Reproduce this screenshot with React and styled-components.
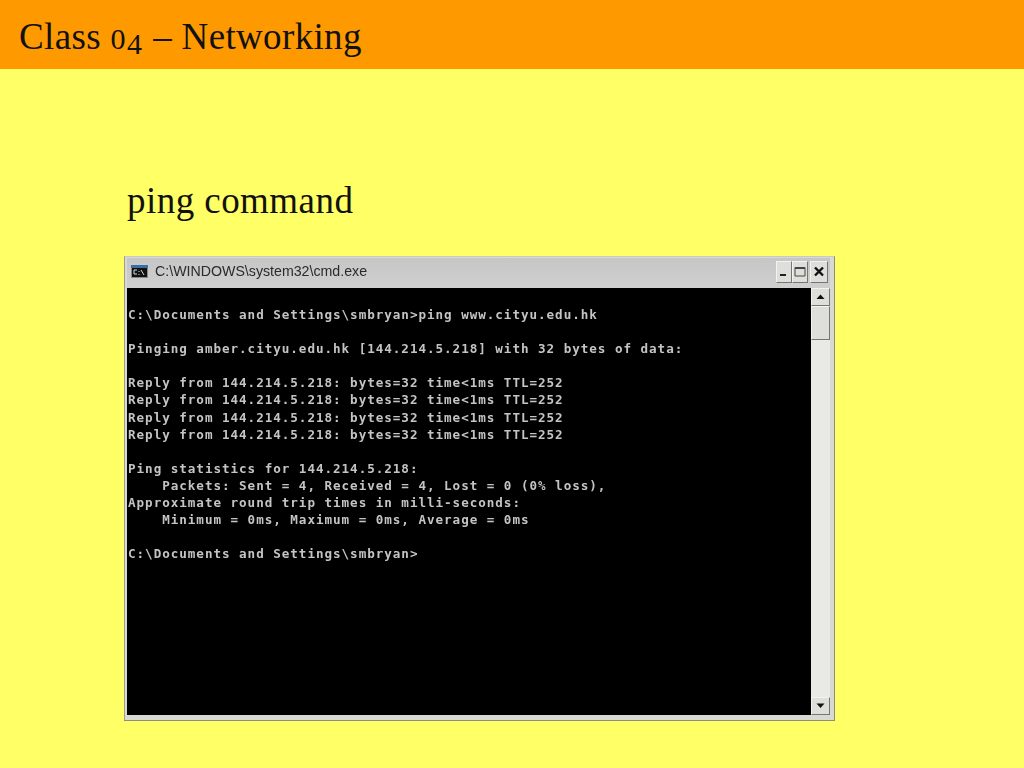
import React from "react";
import styled, {createGlobalStyle} from "styled-components";

const GlobalStyle = createGlobalStyle`
  html, body {
    margin: 0;
    padding: 0;
    background: #ffff66;
  }
`;

const Page = styled.div`
  width: 1024px;
  height: 768px;
  overflow: hidden;
  display: flex;
  flex-direction: column;
  background: #ffff66;
`;

const Header = styled.header`
  height: 69px;
  box-sizing: border-box;
  flex-shrink: 0;
  background: #ff9900;
  display: flex;
  align-items: center;
  padding: 3px 0 0 19px;
`;

const Title = styled.h1`
  margin: 0;
  font: 400 37px/1 "Liberation Serif", serif;
  letter-spacing: 0.35px;
  color: #111;
`;

const OldDigit = styled.span`
  font-size: 30px;
  letter-spacing: 1.5px;
  position: relative;
  top: ${(p) => (p.$drop ? 5 : 0)}px;
`;

const Main = styled.main`
  display: flex;
  flex-direction: column;
  padding: 111px 0 0 124px;
`;

const Heading = styled.h2`
  margin: 0 0 35px 3px;
  font: 400 37px/41px "Liberation Serif", serif;
  letter-spacing: 0.45px;
  color: #111;
`;

const Window = styled.div`
  width: 711px;
  height: 465px;
  box-sizing: border-box;
  display: flex;
  flex-direction: column;
  padding: 1px 4px 5px 2px;
  background: #d8d8d4;
  border: 1px solid #c9c9c2;
  border-left-color: #9c9c94;
  border-right-color: #8d8d78;
  border-bottom-color: #8d8d78;
`;

const TitleBar = styled.div`
  height: 30px;
  flex-shrink: 0;
  display: flex;
  align-items: center;
  padding: 0 2px 3px 4px;
  box-sizing: border-box;
  background: linear-gradient(#c6c6c6, #cfcfcf);
`;

const CmdIcon = styled.svg`
  width: 17px;
  height: 13px;
  margin-right: 7px;
`;

const TitleText = styled.span`
  flex: 1;
  font: 400 14.2px/1 "Liberation Sans", sans-serif;
  color: #2b2b2b;
  filter: blur(0.25px);
`;

const WinButton = styled.div`
  width: ${(p) => p.$w || 16}px;
  height: 22px;
  margin-left: ${(p) => p.$gap || 0}px;
  box-sizing: border-box;
  display: flex;
  align-items: center;
  justify-content: center;
  background: #dededa;
  border: 1px solid #f2f2f0;
  border-right-color: #77776f;
  border-bottom-color: #77776f;
`;

const Body = styled.div`
  flex: 1;
  min-height: 0;
  display: flex;
`;

const Console = styled.pre`
  flex: 1;
  margin: 0;
  padding: 18px 0 0 1px;
  background: #000;
  color: #c4c4c4;
  font: 700 12.6px/17.1px "DejaVu Sans Mono", monospace;
  letter-spacing: 0.96px;
  overflow: hidden;
`;

const ConsoleText = styled.span`
  display: block;
  filter: blur(0.45px);
`;

const ScrollBar = styled.div`
  width: 19px;
  flex-shrink: 0;
  display: flex;
  flex-direction: column;
  background: #e9e9e5;
`;

const ScrollButton = styled.div`
  height: 18px;
  box-sizing: border-box;
  display: flex;
  align-items: center;
  justify-content: center;
  background: #dededa;
  border: 1px solid #f2f2f0;
  border-right-color: #77776f;
  border-bottom-color: #77776f;
`;

const Thumb = styled.div`
  height: 34px;
  box-sizing: border-box;
  background: #dededa;
  border: 1px solid #f2f2f0;
  border-right-color: #77776f;
  border-bottom-color: #77776f;
`;

const Track = styled.div`
  flex: 1;
`;

const consoleText = `C:\\Documents and Settings\\smbryan>ping www.cityu.edu.hk

Pinging amber.cityu.edu.hk [144.214.5.218] with 32 bytes of data:

Reply from 144.214.5.218: bytes=32 time<1ms TTL=252
Reply from 144.214.5.218: bytes=32 time<1ms TTL=252
Reply from 144.214.5.218: bytes=32 time<1ms TTL=252
Reply from 144.214.5.218: bytes=32 time<1ms TTL=252

Ping statistics for 144.214.5.218:
    Packets: Sent = 4, Received = 4, Lost = 0 (0% loss),
Approximate round trip times in milli-seconds:
    Minimum = 0ms, Maximum = 0ms, Average = 0ms

C:\\Documents and Settings\\smbryan>`;

const App = () => {
    return (
        <Page>
            <GlobalStyle/>
            <Header>
                <Title>Class <OldDigit>0</OldDigit><OldDigit $drop>4</OldDigit> – Networking</Title>
            </Header>
            <Main>
                <Heading>ping command</Heading>
                <Window>
                    <TitleBar>
                        <CmdIcon viewBox="0 0 17 13">
                            <rect x="0" y="0" width="17" height="13" fill="#8a8a8a"/>
                            <rect x="0" y="0" width="17" height="3" fill="#3a6ea5"/>
                            <rect x="1" y="3" width="15" height="9" fill="#111"/>
                            <path d="M3 5H6M3 5V9H6M8 6V7M8 9V10M10 5L13 10" stroke="#ddd" strokeWidth="1" fill="none"/>
                        </CmdIcon>
                        <TitleText>C:\WINDOWS\system32\cmd.exe</TitleText>
                        <WinButton>
                            <svg width="10" height="10" viewBox="0 0 10 10"><rect x="1" y="7" width="6" height="2" fill="#222"/></svg>
                        </WinButton>
                        <WinButton>
                            <svg width="12" height="11" viewBox="0 0 12 11"><path d="M1 1.5H11V10H1Z" fill="none" stroke="#444" strokeWidth="1"/><rect x="1" y="1" width="10" height="2" fill="#444"/></svg>
                        </WinButton>
                        <WinButton $w={18} $gap={2}>
                            <svg width="12" height="11" viewBox="0 0 12 11"><path d="M2 1.5L10 9.5M10 1.5L2 9.5" stroke="#111" strokeWidth="2.4"/></svg>
                        </WinButton>
                    </TitleBar>
                    <Body>
                        <Console><ConsoleText>{consoleText}</ConsoleText></Console>
                        <ScrollBar>
                            <ScrollButton>
                                <svg width="9" height="6" viewBox="0 0 9 6"><path d="M4.5 0.5L8.5 5H0.5Z" fill="#111"/></svg>
                            </ScrollButton>
                            <Thumb/>
                            <Track/>
                            <ScrollButton>
                                <svg width="9" height="6" viewBox="0 0 9 6"><path d="M0.5 0.5H8.5L4.5 5Z" fill="#111"/></svg>
                            </ScrollButton>
                        </ScrollBar>
                    </Body>
                </Window>
            </Main>
        </Page>
    );
};

export default App;
